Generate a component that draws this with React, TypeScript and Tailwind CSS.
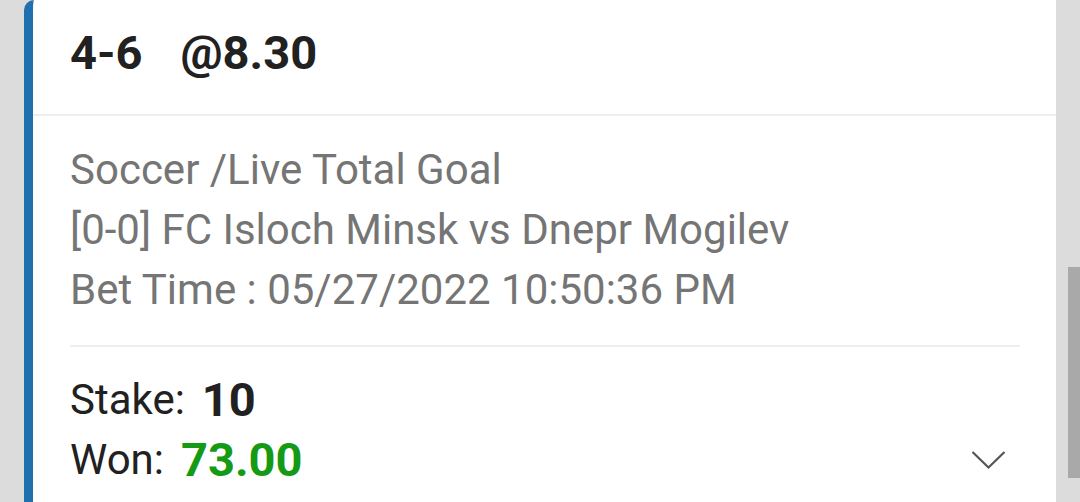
export default function App() {
  return (
    <div className="w-[1080px] h-[502px] overflow-hidden bg-[#dcdcdc] flex font-['Roboto',sans-serif]">
      <div className="w-[24px] shrink-0" />
      <div className="w-[1032px] shrink-0 h-full bg-white border-l-[9px] border-[#2170ae] rounded-tl-[10px] flex flex-col">
        <header className="h-[116px] border-b-2 border-[#eeeeee] pl-[37px] flex items-center gap-[38px] pb-[8px] text-[47px] font-bold text-[#212121]">
          <span>4-6</span>
          <span>@8.30</span>
        </header>

        <div className="pl-[37px] pr-[36px] pt-[24px] flex-1 flex flex-col">
          <div className="text-[42px] leading-[60px] text-[#757575]">
            <div>Soccer /Live Total Goal</div>
            <div>[0-0] FC Isloch Minsk vs Dnepr Mogilev</div>
            <div>Bet Time : 05/27/2022 10:50:36 PM</div>
          </div>

          <div className="mt-[25px] h-[2px] bg-[#eeeeee]" />

          <div className="pt-[23px] text-[42px] leading-[60px] text-[#212121]">
            <div className="flex items-center">
              <span>Stake:</span>
              <span className="ml-[17px] text-[47px] font-bold">10</span>
            </div>
            <div className="flex items-center">
              <span>Won:</span>
              <span className="ml-[17px] text-[47px] font-bold text-[#159a15]">73.00</span>
              <svg className="ml-auto mr-[14px]" width="35" height="20" viewBox="0 0 35 20" fill="none">
                <path d="M1.5 2 L17.5 17.5 L33.5 2" stroke="#555555" strokeWidth="2.2" />
              </svg>
            </div>
          </div>
        </div>
      </div>
      <div className="flex-1 flex flex-col">
        <div className="h-[267px]" />
        <div className="ml-auto w-[12px] h-[211px] bg-[#a9a9a9]" />
      </div>
    </div>
  );
}
